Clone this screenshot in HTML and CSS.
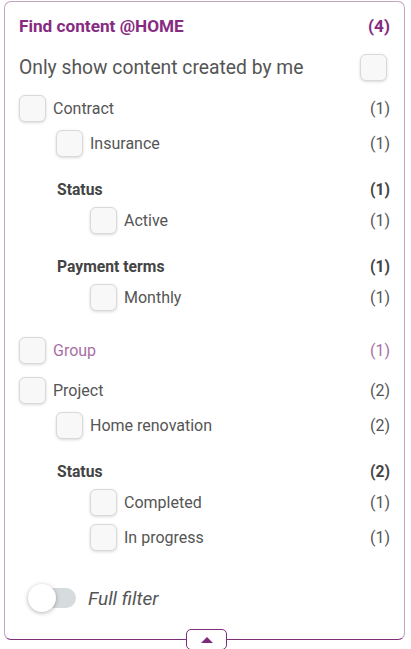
FILE: index.html
```html
<!DOCTYPE html>
<html>
<head>
<meta charset="utf-8">
<link rel="stylesheet" href="styles.css">
</head>
<body>
<div class="card">
  <div class="title-row">
    <span class="title">Find content @HOME</span>
    <span class="title-count">(4)</span>
  </div>
  <div class="mine-row">
    <span class="mine-label">Only show content created by me</span>
    <span class="box mine-box"></span>
  </div>

  <div class="group">
    <div class="row"><span class="box"></span><span class="label">Contract</span><span class="count">(1)</span></div>
    <div class="row lvl1"><span class="box"></span><span class="label">Insurance</span><span class="count">(1)</span></div>
    <div class="facet lvl1"><span>Status</span><span>(1)</span></div>
    <div class="row lvl2"><span class="box"></span><span class="label">Active</span><span class="count">(1)</span></div>
    <div class="facet lvl1"><span>Payment terms</span><span>(1)</span></div>
    <div class="row lvl2"><span class="box"></span><span class="label">Monthly</span><span class="count">(1)</span></div>
  </div>

  <div class="group">
    <div class="row muted"><span class="box"></span><span class="label">Group</span><span class="count">(1)</span></div>
  </div>

  <div class="group">
    <div class="row"><span class="box"></span><span class="label">Project</span><span class="count">(2)</span></div>
    <div class="row lvl1"><span class="box"></span><span class="label">Home renovation</span><span class="count">(2)</span></div>
    <div class="facet lvl1"><span>Status</span><span>(2)</span></div>
    <div class="row lvl2"><span class="box"></span><span class="label">Completed</span><span class="count">(1)</span></div>
    <div class="row lvl2"><span class="box"></span><span class="label">In progress</span><span class="count">(1)</span></div>
  </div>

  <div class="toggle-row">
    <span class="toggle"><span class="knob"></span></span>
    <span class="toggle-label">Full filter</span>
  </div>

  <button class="collapse" type="button" aria-label="Collapse">
    <svg width="12" height="6" viewBox="0 0 12 6"><path d="M0 6 L6 0 L12 6 Z" fill="#7d2a7a"/></svg>
  </button>
</div>
</body>
</html>
```

FILE: styles.css
```css
* { box-sizing: border-box; }
html, body { margin: 0; padding: 0; background: #fff; }
body {
  font-family: Roboto, "Liberation Sans", sans-serif;
  color: #555;
  width: 411px;
  height: 649px;
  overflow: hidden;
}
.card {
  position: relative;
  margin: 1px 6px 0 4px;
  height: 639px;
  border: 1px solid #c4a2c1;
  border-bottom-color: #7d2f79;
  border-radius: 7px;
  padding: 10px 14px 0 14px;
}
.title-row {
  height: 28px;
  display: flex;
  align-items: center;
  justify-content: space-between;
  font-size: 17.2px;
  font-weight: 700;
  color: #862b81;
}
.mine-row {
  margin-top: 8px;
  height: 38px;
  display: flex;
  align-items: center;
  justify-content: space-between;
}
.mine-label { font-size: 19.3px; color: #555; }
.mine-box { margin-right: 3px; }
.box {
  flex: none;
  width: 27px;
  height: 27px;
  border: 1px solid #d9d9d9;
  border-radius: 6px;
  background: #f8f8f8;
  box-shadow: 0 1px 3px rgba(0,0,0,0.15);
}
.group { margin-top: 5px; }
.group + .group { margin-top: 18px; }
.group + .group + .group { margin-top: 5px; }
.row {
  height: 35px;
  display: flex;
  align-items: center;
  font-size: 16px;
}
.label { margin-left: 7px; flex: 1; color: #555; }
.count { color: #555; }
.lvl1 { padding-left: 37px; }
.lvl2 { padding-left: 71px; }
.facet.lvl1 { padding-left: 38px; }
.facet {
  margin-top: 14px;
  height: 28px;
  display: flex;
  align-items: center;
  justify-content: space-between;
  font-size: 15.7px;
  font-weight: 700;
  color: #444;
}
.muted .label, .muted .count { color: #a86fa4; }
.toggle-row {
  margin-top: 28px;
  height: 30px;
  display: flex;
  align-items: center;
  padding-left: 9px;
}
.toggle {
  position: relative;
  width: 48px;
  height: 20px;
  border-radius: 10px;
  background: #d6dbde;
}
.knob {
  position: absolute;
  left: 0;
  top: -4px;
  width: 28px;
  height: 28px;
  border-radius: 50%;
  background: #fff;
  box-shadow: 0 1px 4px rgba(0,0,0,0.3);
}
.toggle-label {
  margin-left: 12px;
  font-size: 19px;
  font-style: italic;
  color: #555;
}
.collapse {
  position: absolute;
  left: 181px;
  bottom: -11px;
  width: 41px;
  height: 21px;
  padding: 0;
  border: 1px solid #7d2f79;
  border-radius: 5px;
  background: #fff;
  display: flex;
  align-items: center;
  justify-content: center;
}
```
